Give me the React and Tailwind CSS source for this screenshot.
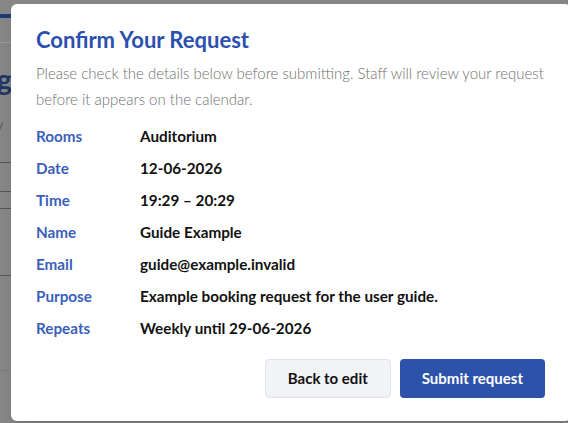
export default function App() {
  const rows = [
    ["Rooms", "Auditorium"],
    ["Date", "12-06-2026"],
    ["Time", "19:29 – 20:29"],
    ["Name", "Guide Example"],
    ["Email", "guide@example.invalid"],
    ["Purpose", "Example booking request for the user guide."],
    ["Repeats", "Weekly until 29-06-2026"],
  ];
  return (
    <div className="relative h-[423px] w-[568px] overflow-hidden bg-[#868686]" style={{ fontFamily: "Lato, 'Noto Sans', sans-serif" }}>
      {/* faded page behind */}
      <div className="flex flex-col">
        <div className="h-[14px]" />
        <div className="h-[4px] w-[14px] bg-[#1e3a78]" />
        <div className="h-[25px] border-b border-[#9a9a9a]" />
        <div className="mt-[20px] -ml-[3px] text-[28px] font-bold leading-[32px] text-[#1f3565]">g</div>
        <div className="mt-[20px] -ml-[4px] text-[14px] leading-[20px] text-[#5a5a5a]">y</div>
        <div className="mt-[27px] h-px w-full bg-[#555]" />
        <div className="mt-[28px] h-px w-full bg-[#555]" />
        <div className="mt-[16px] h-px w-full bg-[#555]" />
        <div className="mt-[66px] h-px w-full bg-[#555]" />
        <div className="mt-[94px] h-px w-full bg-[#7a7a7a]" />
      </div>

      {/* modal */}
      <div className="absolute left-[11px] top-[4px] w-[560px] rounded-[6px] bg-white pl-[25px] pr-[25px] pt-[22px] pb-[23px] shadow-lg">
        <h2 className="text-[22px] font-bold leading-[28px] text-[#2b50ad]">Confirm Your Request</h2>
        <p className="mt-[6px] text-[15px] font-light leading-[26px] text-[#707070]">
          Please check the details below before submitting. Staff will review your request before it appears on the calendar.
        </p>
        <div className="mt-[12px] flex flex-col gap-[8px]">
          {rows.map(([k, v]) => (
            <div key={k} className="flex text-[15.25px] leading-[24px]">
              <div className="w-[104px] font-bold text-[#3a5fbb]">{k}</div>
              <div className="font-bold text-[#111]">{v}</div>
            </div>
          ))}
        </div>
        <div className="mt-[19px] flex justify-end gap-[9px] pr-[1px]">
          <button className="h-[39px] rounded-[4px] border border-[#e2e4e8] bg-[#f2f3f5] px-[22px] text-[15px] font-bold text-[#111]">Back to edit</button>
          <button className="h-[39px] rounded-[4px] bg-[#2d52aa] px-[22px] text-[15px] font-bold text-white">Submit request</button>
        </div>
      </div>
    </div>
  );
}
